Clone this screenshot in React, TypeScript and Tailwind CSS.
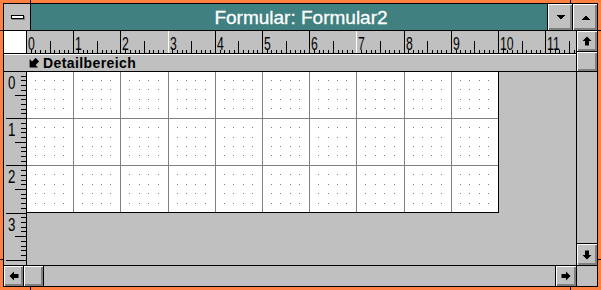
import React from "react";

const U = 47.2;
const bevel =
  "bg-[#c0c0c0] shadow-[inset_1px_1px_0_#ffffff,inset_-1px_-1px_0_#808080,inset_-2px_-2px_0_#808080]";

function Arrow({ dir }: { dir: "up" | "down" | "left" | "right" }) {
  const rot = { up: "", down: "rotate-180", left: "-rotate-90", right: "rotate-90" }[dir];
  return (
    <svg width="10" height="10" viewBox="0 0 10 10" className={rot}>
      <path d="M5 0.5 L9.5 5 H7 V9.5 H3 V5 H0.5 Z" fill="#000" />
    </svg>
  );
}

function Triangle({ up }: { up?: boolean }) {
  return (
    <svg width="9" height="5" viewBox="0 0 9 5" className={up ? "rotate-180" : ""} shapeRendering="crispEdges">
      <path d="M0 0 H9 L4.5 4.5 Z" fill="#000" />
    </svg>
  );
}

function HRuler() {
  const items: React.ReactNode[] = [];
  for (let k = 0; k <= 11; k++) {
    for (let d = 0; d < 10; d++) {
      const x = Math.round(k * U + (d * U) / 10) - 1;
      if (x < 0 || x > 548) continue;
      if (d === 0) {
        items.push(<rect key={`${k}-${d}`} x={x} y={0} width={1} height={22} fill={k === 3 || k === 7 ? "#fff" : "#000"} />);
      } else if (d === 5) {
        items.push(<rect key={`${k}-${d}`} x={x} y={10} width={1} height={12} fill="#000" />);
      } else {
        items.push(<rect key={`${k}-${d}`} x={x} y={19} width={1} height={3} fill="#000" />);
      }
    }
  }
  const labels = Array.from({ length: 12 }, (_, k) => k);
  return (
    <svg width="549" height="22" shapeRendering="crispEdges" className="block">
      {items}
      {labels.map((k) => (
        <text
          key={k}
          transform={`translate(${Math.round(k * U) + 1} 19) scale(0.68 1)`}
          fontSize="18"
          fontFamily="'Liberation Sans', Arial, sans-serif"
          fill="#000"
        >
          {k}
        </text>
      ))}
    </svg>
  );
}

function VRuler() {
  const items: React.ReactNode[] = [];
  for (let k = 0; k <= 4; k++) {
    for (let d = 0; d < 10; d++) {
      const y = Math.round(k * U + (d * U) / 10) - 1;
      if (y < 0 || y > 192) continue;
      if (d === 0) items.push(<rect key={`${k}-${d}`} x={2} y={y} width={20} height={1} fill="#000" />);
      else if (d === 5) items.push(<rect key={`${k}-${d}`} x={11} y={y} width={11} height={1} fill="#000" />);
      else items.push(<rect key={`${k}-${d}`} x={17} y={y} width={5} height={1} fill="#000" />);
    }
  }
  return (
    <svg width="22" height="193" shapeRendering="crispEdges" className="block">
      {items}
      {[0, 1, 2, 3].map((k) => (
        <text
          key={k}
          transform={`translate(4 ${Math.round(k * U) + 17}) scale(0.7 1)`}
          fontSize="19"
          fontFamily="'Liberation Sans', Arial, sans-serif"
          fill="#000"
        >
          {k}
        </text>
      ))}
    </svg>
  );
}

function FormGrid() {
  const lines: React.ReactNode[] = [];
  for (let k = 1; k <= 9; k++) {
    const x = Math.round(k * U) - 1;
    lines.push(<rect key={`v${k}`} x={x} y={0} width={1} height={140} fill="#808080" />);
  }
  for (let r = 1; r <= 2; r++) {
    const y = Math.round(r * U) - 1;
    lines.push(<rect key={`h${r}`} x={0} y={y} width={471} height={1} fill="#808080" />);
  }
  const dots: React.ReactNode[] = [];
  for (let k = 0; k < 10; k++) {
    for (let r = 0; r < 3; r++) {
      for (let i = 1; i <= 4; i++) {
        for (let j = 1; j <= 4; j++) {
          const x = Math.round(U * (k + i / 5) - 1.5);
          const y = Math.round(U * (r + j / 5) - 1.5);
          if (y >= 140) continue;
          dots.push(<rect key={`${k}-${r}-${i}-${j}`} x={x} y={y} width={1} height={1} fill="#808080" />);
        }
      }
    }
  }
  return (
    <svg width="471" height="140" shapeRendering="crispEdges" className="block">
      {dots}
      {lines}
    </svg>
  );
}

export default function App() {
  return (
    <div className="relative w-[601px] h-[290px] bg-[#ff8040] p-[3px] font-['Liberation_Sans',Arial,sans-serif]">
      <div className="flex h-full flex-col border border-black bg-[#c0c0c0]">
        {/* Titelleiste */}
        <div className="flex h-[27px] shrink-0 border-b border-black">
          <div className="flex w-[27px] items-center justify-center border-r border-black bg-[#c0c0c0]">
            <div className="h-[4px] w-[13px] border border-black bg-white shadow-[1px_1px_0_#808080]"></div>
          </div>
          <div className="flex flex-1 items-center justify-center bg-[#408080] pl-[24px] text-[19px] leading-none text-white [-webkit-text-stroke:0.3px_white]">
            Formular: Formular2
          </div>
          <div className="flex w-[25px] border-l border-black">
            <div className={`flex flex-1 items-center justify-center ${bevel}`}>
              <Triangle />
            </div>
          </div>
          <div className="flex w-[25px] border-l border-black">
            <div className={`flex flex-1 items-center justify-center ${bevel}`}>
              <Triangle up />
            </div>
          </div>
        </div>

        {/* Mitte */}
        <div className="flex flex-1 min-h-0">
          <div className="flex flex-1 flex-col min-w-0">
            <div className="flex h-[23px] shrink-0 border-b border-black">
              <div className="w-[23px] border-r border-black bg-white"></div>
              <div className="flex-1 overflow-hidden">
                <HRuler />
              </div>
            </div>
            <div className="flex h-[18px] shrink-0 items-center border-y border-t-white border-b-black pl-[24px]">
              <svg width="11" height="11" viewBox="0 0 11 11" className="mr-[4px]">
                <g transform="rotate(-45 5.5 5.5)">
                  <path d="M0 5.5 L6 -0.5 V3 H11 V8 H6 V11.5 Z" fill="#000" />
                </g>
              </svg>
              <span className="text-[14px] font-bold leading-none tracking-[0.4px] text-black">Detailbereich</span>
            </div>
            <div className="flex flex-1 min-h-0">
              <div className="w-[23px] border-r border-black">
                <VRuler />
              </div>
              <div className="flex-1">
                <div className="w-[472px] h-[141px] border-r border-b border-black bg-white">
                  <FormGrid />
                </div>
              </div>
            </div>
          </div>
          {/* vertikale Bildlaufleiste */}
          <div className="flex w-[21px] flex-col border-l border-black">
            <div className="h-[21px] border-b border-black flex">
              <div className={`flex flex-1 items-center justify-center ${bevel}`}>
                <Arrow dir="up" />
              </div>
            </div>
            <div className="h-[20px] border-b border-black flex">
              <div className={`flex-1 ${bevel}`}></div>
            </div>
            <div className="flex-1"></div>
            <div className="h-[22px] border-t border-black flex">
              <div className={`flex flex-1 items-center justify-center ${bevel}`}>
                <Arrow dir="down" />
              </div>
            </div>
          </div>
        </div>

        {/* horizontale Bildlaufleiste */}
        <div className="flex h-[21px] shrink-0 border-t border-black">
          <div className="flex w-[20px] border-r border-black">
            <div className={`flex flex-1 items-center justify-center ${bevel}`}>
              <Arrow dir="left" />
            </div>
          </div>
          <div className="flex w-[20px] border-r border-black">
            <div className={`flex-1 ${bevel}`}></div>
          </div>
          <div className="flex-1"></div>
          <div className="flex w-[21px] border-l border-black">
            <div className={`flex flex-1 items-center justify-center ${bevel}`}>
              <Arrow dir="right" />
            </div>
          </div>
          <div className="w-[21px] border-l border-black"></div>
        </div>
      </div>

      {/* Eckmarkierungen im Rahmen */}
      <div className="absolute left-[30px] top-0 h-[4px] w-px bg-black"></div>
      <div className="absolute left-[570px] top-0 h-[4px] w-px bg-black"></div>
      <div className="absolute left-[30px] bottom-0 h-[4px] w-px bg-black"></div>
      <div className="absolute left-[570px] bottom-0 h-[4px] w-px bg-black"></div>
      <div className="absolute left-0 top-[30px] h-px w-[4px] bg-black"></div>
      <div className="absolute right-0 top-[30px] h-px w-[4px] bg-black"></div>
      <div className="absolute left-0 top-[259px] h-px w-[4px] bg-black"></div>
      <div className="absolute right-0 top-[259px] h-px w-[4px] bg-black"></div>
    </div>
  );
}
